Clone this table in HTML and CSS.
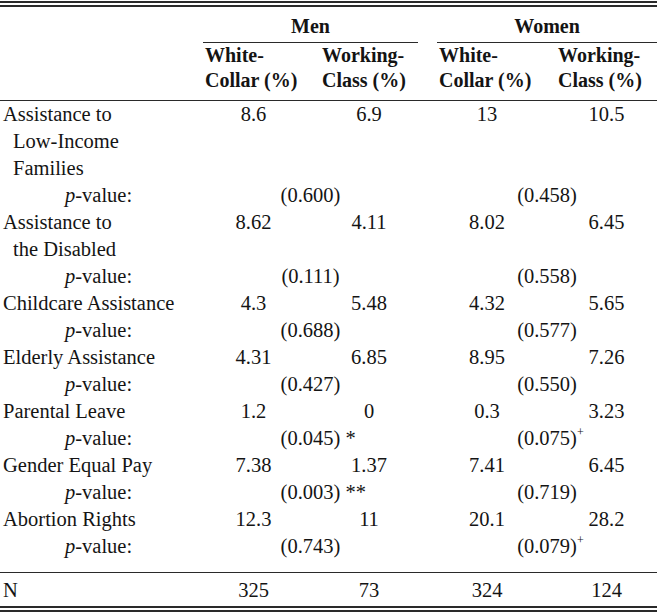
FILE: index.html
```html
<!DOCTYPE html>
<html lang="en">
<head>
<meta charset="utf-8">
<title>Policy priorities by class and gender</title>
<link rel="stylesheet" href="styles.css">
</head>
<body>
<table class="stats">
  <colgroup>
    <col class="c-label">
    <col class="c-m1">
    <col class="c-m2">
    <col class="c-gap">
    <col class="c-w1">
    <col class="c-w2">
  </colgroup>
  <thead>
    <tr>
      <th class="corner" rowspan="2"></th>
      <th class="group" colspan="2">Men</th>
      <th class="gap-head" rowspan="2"></th>
      <th class="group" colspan="2">Women</th>
    </tr>
    <tr>
      <th class="sub">White-<br>Collar (%)</th>
      <th class="sub">Working-<br>Class (%)</th>
      <th class="sub">White-<br>Collar (%)</th>
      <th class="sub">Working-<br>Class (%)</th>
    </tr>
  </thead>
  <tbody>
    <tr>
      <td class="label">Assistance to<br>Low-Income<br>Families</td>
      <td class="num m1">8.6</td><td class="num">6.9</td><td></td>
      <td class="num w1">13</td><td class="num">10.5</td>
    </tr>
    <tr>
      <td class="plabel"><i>p</i>-value:</td>
      <td class="pval" colspan="2">(0.600)</td><td></td>
      <td class="pval" colspan="2">(0.458)</td>
    </tr>
    <tr>
      <td class="label">Assistance to<br>the Disabled</td>
      <td class="num m1">8.62</td><td class="num">4.11</td><td></td>
      <td class="num w1">8.02</td><td class="num">6.45</td>
    </tr>
    <tr>
      <td class="plabel"><i>p</i>-value:</td>
      <td class="pval" colspan="2">(0.111)</td><td></td>
      <td class="pval" colspan="2">(0.558)</td>
    </tr>
    <tr>
      <td class="label">Childcare Assistance</td>
      <td class="num m1">4.3</td><td class="num">5.48</td><td></td>
      <td class="num w1">4.32</td><td class="num">5.65</td>
    </tr>
    <tr>
      <td class="plabel"><i>p</i>-value:</td>
      <td class="pval" colspan="2">(0.688)</td><td></td>
      <td class="pval" colspan="2">(0.577)</td>
    </tr>
    <tr>
      <td class="label">Elderly Assistance</td>
      <td class="num m1">4.31</td><td class="num">6.85</td><td></td>
      <td class="num w1">8.95</td><td class="num">7.26</td>
    </tr>
    <tr>
      <td class="plabel"><i>p</i>-value:</td>
      <td class="pval" colspan="2">(0.427)</td><td></td>
      <td class="pval" colspan="2">(0.550)</td>
    </tr>
    <tr>
      <td class="label">Parental Leave</td>
      <td class="num m1">1.2</td><td class="num">0</td><td></td>
      <td class="num w1">0.3</td><td class="num">3.23</td>
    </tr>
    <tr>
      <td class="plabel"><i>p</i>-value:</td>
      <td class="pval" colspan="2">(0.045)<span class="sig">&nbsp;*</span></td><td></td>
      <td class="pval" colspan="2">(0.075)<span class="sig"><sup>+</sup></span></td>
    </tr>
    <tr>
      <td class="label">Gender Equal Pay</td>
      <td class="num m1">7.38</td><td class="num">1.37</td><td></td>
      <td class="num w1">7.41</td><td class="num">6.45</td>
    </tr>
    <tr>
      <td class="plabel"><i>p</i>-value:</td>
      <td class="pval" colspan="2">(0.003)<span class="sig">&nbsp;**</span></td><td></td>
      <td class="pval" colspan="2">(0.719)</td>
    </tr>
    <tr>
      <td class="label">Abortion Rights</td>
      <td class="num m1">12.3</td><td class="num">11</td><td></td>
      <td class="num w1">20.1</td><td class="num">28.2</td>
    </tr>
    <tr class="last">
      <td class="plabel"><i>p</i>-value:</td>
      <td class="pval" colspan="2">(0.743)</td><td></td>
      <td class="pval" colspan="2">(0.079)<span class="sig"><sup>+</sup></span></td>
    </tr>
  </tbody>
  <tfoot>
    <tr>
      <td class="label">N</td>
      <td class="num m1">325</td><td class="num">73</td><td></td>
      <td class="num w1">324</td><td class="num">124</td>
    </tr>
  </tfoot>
</table>
</body>
</html>
```
FILE: styles.css
```css
html, body {
  margin: 0;
  background: #ffffff;
}

body {
  padding-top: 1px;
  font-family: "Liberation Serif", "Times New Roman", serif;
  color: #141414;
}

.stats {
  width: 657px;
  table-layout: fixed;
  border-collapse: separate;
  border-spacing: 0;
  border-top: 6px double #2a2a2a;
}

.c-label { width: 203px; }
.c-m1 { width: 117px; }
.c-m2 { width: 98px; }
.c-gap { width: 19px; }
.c-w1 { width: 119px; }
.c-w2 { width: 101px; }

.stats th,
.stats td {
  padding: 0;
  vertical-align: top;
}

/* header */
.stats thead th {
  font-size: 20px;
  font-weight: bold;
}

.stats .group {
  text-align: center;
  line-height: 24px;
  padding: 7px 0 4px;
  border-bottom: 1px solid #2a2a2a;
}

.stats .sub {
  text-align: left;
  line-height: 25px;
  padding: 0 0 7px 2px;
  white-space: nowrap;
  border-bottom: 1px solid #2a2a2a;
}

.stats .corner,
.stats .gap-head {
  border-bottom: 1px solid #2a2a2a;
}

/* body */
.stats tbody td,
.stats tfoot td {
  font-size: 20.5px;
  line-height: 27px;
}

.stats .label {
  text-align: left;
  padding-left: 13px;
  text-indent: -10px;
}

.stats .plabel {
  text-align: left;
  padding-left: 65px;
}

.stats .num {
  text-align: center;
}

.stats .num.m1 { padding-right: 16px; }
.stats .num.w1 { padding-right: 19px; }

.stats .pval {
  text-align: center;
  white-space: nowrap;
}

.sig {
  display: inline-block;
  width: 0;
  white-space: nowrap;
  text-indent: 0;
}

.sig sup {
  font-size: 12px;
  line-height: 0;
  vertical-align: 9px;
}

.stats tbody tr.last td {
  padding-bottom: 12px;
  border-bottom: 1px solid #2a2a2a;
}

.stats tfoot td {
  padding-top: 4px;
  padding-bottom: 2px;
  border-bottom: 6px double #2a2a2a;
}
```
